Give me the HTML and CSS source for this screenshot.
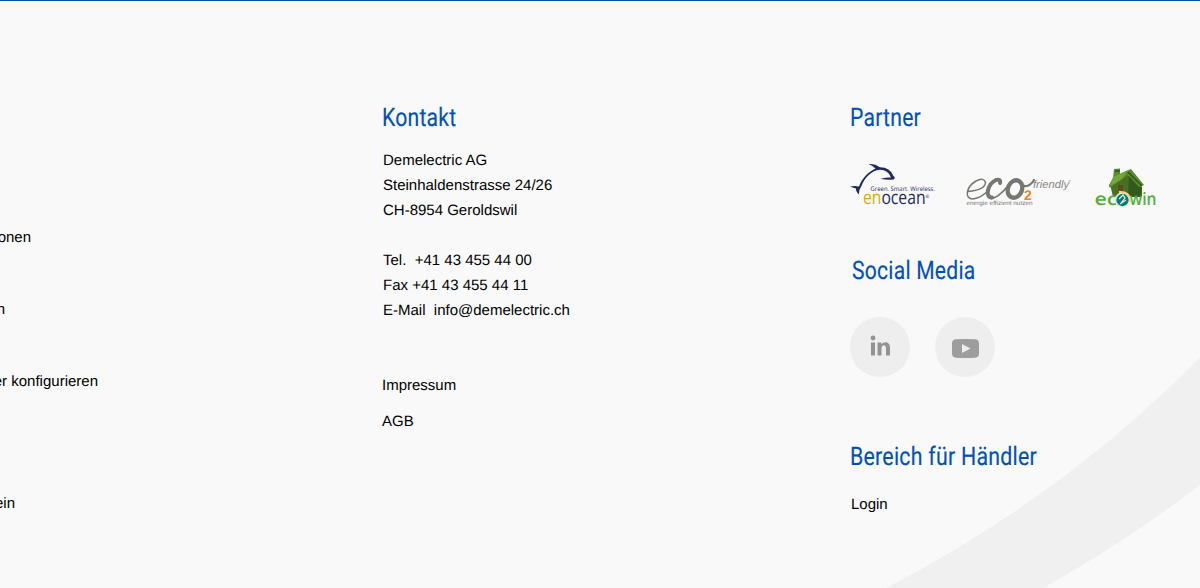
FILE: index.html
```html
<!DOCTYPE html>
<html lang="de">
<head>
<meta charset="utf-8">
<title>Demelectric AG</title>
<link rel="stylesheet" href="styles.css">
</head>
<body>
<footer class="footer">
  <svg class="swoosh" width="320" height="236" viewBox="880 352 320 236" aria-hidden="true"><path d="M886 588C1002 528 1112 448 1200 357V485Q1124 543 1043 588Z" fill="#f0f0f0"/></svg>
  <nav class="links">
    <a class="w-a">onen</a>
    <a class="w-b">n</a>
    <a class="w-c">er konfigurieren</a>
    <a class="w-d">ein</a>
  </nav>
  <section class="contact">
    <h2><svg width="200" height="32"><text x="0" y="24" textLength="74.500" lengthAdjust="spacingAndGlyphs">Kontakt</text></svg></h2>
    <address>Demelectric AG
Steinhaldenstrasse 24/26
CH-8954 Geroldswil

Tel.  +41 43 455 44 00
Fax +41 43 455 44 11
E-Mail  info@demelectric.ch</address>
    <div class="legal"><a>Impressum</a><a>AGB</a></div>
  </section>
  <section class="aside">
    <h2><svg width="200" height="32"><text x="0" y="24" textLength="71" lengthAdjust="spacingAndGlyphs">Partner</text></svg></h2>
    <div class="partners">
      <svg width="90" height="50" viewBox="850 160 90 50">
        <g fill="#1d2a63">
          <path d="M850 186.500Q855 185.500 859 186.500C862 178.500 868 172 875.500 168.500Q873 165.500 868.500 164Q875 163.500 880 167.300Q890 167.500 893.500 176Q896 178 893.500 179.500Q887 180.300 880.500 178.700Q886 177.400 891 177.500Q888 169.800 880 169.800C871 170.500 864.500 178 861 187Q858.500 190 858.800 194.500Q855.500 191 856 188.500Q853.500 188 850 186.500Z"/>
          <text x="870.500" y="190.700" class="tag" textLength="64.500" lengthAdjust="spacingAndGlyphs">Green. Smart. Wireless.</text>
          <text x="863" y="204" class="ocean" textLength="62.500" lengthAdjust="spacingAndGlyphs"><tspan fill="#dda900">en</tspan>ocean</text>
          <text x="925.500" y="198" font-size="5">®</text>
        </g>
      </svg>
      <svg width="106" height="50" viewBox="966 160 106 50">
        <g fill="none" stroke="#777772" stroke-linecap="round">
          <path stroke-width="1.500" d="M968 191.500Q985 190 985.500 182.500Q984 177 976 181C966 187 964 199 973 199Q981 198 989 190"/>
          <path stroke-width="4" d="M1000 183Q1001 178.500 996 180C987.500 184 984.500 197.500 992 197.500"/>
          <path stroke-width="1.800" d="M991 198.500Q998 198 1007 187"/>
          <ellipse cx="1015" cy="189" rx="7" ry="9" transform="rotate(22 1015 189)" stroke-width="4.300"/>
          <path stroke-width="2.200" d="M1018 180Q1022 187 1027 186Q1031 185 1034 180"/>
        </g>
        <text x="1024" y="200" class="two">2</text>
        <text x="1033" y="187.500" class="friendly" textLength="36" lengthAdjust="spacingAndGlyphs">friendly</text>
        <text x="1068.500" y="182" font-size="3" fill="#777">®</text>
        <text x="966.500" y="205" class="energy" textLength="66" lengthAdjust="spacingAndGlyphs">energie effizient nutzen</text>
      </svg>
      <svg width="64" height="50" viewBox="1093 160 64 50">
        <path d="M1110 184L1127 174L1142 187V197H1113Z" fill="#487023"/>
        <path d="M1129 174L1142 188L1140 197H1128Z" fill="#315a1c"/>
        <path d="M1113 178L1114 169L1120 168.500V174L1131 169L1144 185L1139 187L1128 175L1111 187Q1109 189 1109 185Z" fill="#598c2c"/>
        <path d="M1113 177L1128 170L1122 179L1110 186Z" fill="#72a83a"/>
        <path d="M1128 172L1142 186M1115 171H1120" stroke="#31551b" stroke-width="1.500"/>
        <path d="M1118 190V185H1123V191Z" fill="#6b451e"/>
        <g class="eco"><text x="1094.500" y="205" textLength="23" lengthAdjust="spacingAndGlyphs">ec</text><text x="1129.500" y="205" textLength="27" lengthAdjust="spacingAndGlyphs">win</text></g>
        <circle cx="1122.500" cy="200" r="6.900" fill="#08796f" stroke="#e5ede1" stroke-width="1.500"/>
        <path d="M1119 192Q1130 191 1130.500 202" fill="none" stroke="#efcf93" stroke-width="2"/>
        <path d="M1119 199L1123 195L1125 198L1121 203M1120 204L1126 200" fill="none" stroke="#dceee8" stroke-width="1.200"/>
      </svg>
    </div>
    <h2 class="social-title"><svg width="200" height="32"><text x="0" y="24" textLength="123.500" lengthAdjust="spacingAndGlyphs">Social Media</text></svg></h2>
    <div class="social">
      <a aria-label="LinkedIn"><svg width="60" height="60" fill="#939393"><circle cx="23" cy="21" r="2.400"/><path d="M21 25.500H25V38.500H21ZM27.500 25.500H31.300V27.300C34 24 40 24.500 40 30.500V38.500H36V31.500C36 27 31.500 27.500 31.500 31.500V38.500H27.500Z"/></svg></a>
      <a aria-label="YouTube"><svg width="60" height="60"><path d="M21 22.300Q30.500 21.700 40 22.300Q44 22.500 44 26.500V36.500Q44 40.500 40 40.700Q30.500 41.300 21 40.700Q17 40.500 17 36.500V26.500Q17 22.500 21 22.300Z" fill="#9d9d9d"/><path d="M27 27L35.500 31.500L27 36Z" fill="#eee"/></svg></a>
    </div>
    <h2><svg width="200" height="32"><text x="0" y="24" textLength="187" lengthAdjust="spacingAndGlyphs">Bereich für Händler</text></svg></h2>
    <a class="login">Login</a>
  </section>
</footer>
</body>
</html>
```

FILE: styles.css
```css
* { box-sizing: border-box; }
body { margin: 0; font: 15px/25px "Liberation Sans", Arial, sans-serif; color: #000; }
.footer { position: relative; display: grid; grid-template-columns: 382px 468px 350px; height: 588px; overflow: hidden; border-top: 1px solid #0050b4; background: #f9f9f9; text-rendering: geometricPrecision; }
.swoosh { position: absolute; right: 0; bottom: 0; }
.links { padding-top: 224px; display: flex; flex-direction: column; position: relative; }
.links a { display: flex; justify-content: flex-end; white-space: nowrap; height: 25px; }
.w-a { width: 31px; margin-bottom: 47px; }
.w-b { width: 5px; margin-bottom: 47px; }
.w-c { width: 98px; margin-bottom: 97px; }
.w-d { width: 15px; }
.contact, .aside { position: relative; padding-top: 101px; }
h2 { margin: 0; height: 32px; }
h2 svg { display: block; overflow: visible; }
h2 text { font: 25.500px Roboto, "Liberation Sans", sans-serif; letter-spacing: .3px; fill: #0050b9; stroke: #0050b9; stroke-width: .15px; }
address { font-style: normal; white-space: pre; margin: 14px 0 0 1px; height: 175px; }
.legal { display: flex; flex-direction: column; gap: 11px; margin-top: 50px; }
.partners { display: flex; height: 50px; margin-top: 26px; }
.partners svg:nth-child(2) { margin-left: 26px; }
.partners svg:nth-child(3) { margin-left: 21px; }
.tag { font: 6.300px "Open Sans", sans-serif; }
.ocean { font: 19px "Open Sans", sans-serif; }
.two { font: bold 14px "Liberation Sans", sans-serif; fill: #f4801f; }
.friendly { font: italic 11px "Liberation Sans", sans-serif; fill: #85857f; }
.energy { font: 6px "Liberation Sans", sans-serif; fill: #777; }
.eco { font: 600 17.500px "Open Sans", sans-serif; fill: #51ae3d; }
.social-title { margin: 45px 0 0 2px; }
.social { display: flex; gap: 25px; margin: 30px 0 64px; }
.social a { width: 60px; height: 60px; border-radius: 50%; background: #eee; }
.social svg { display: block; }
.login { display: block; margin: 19px 0 0 1px; }
```
